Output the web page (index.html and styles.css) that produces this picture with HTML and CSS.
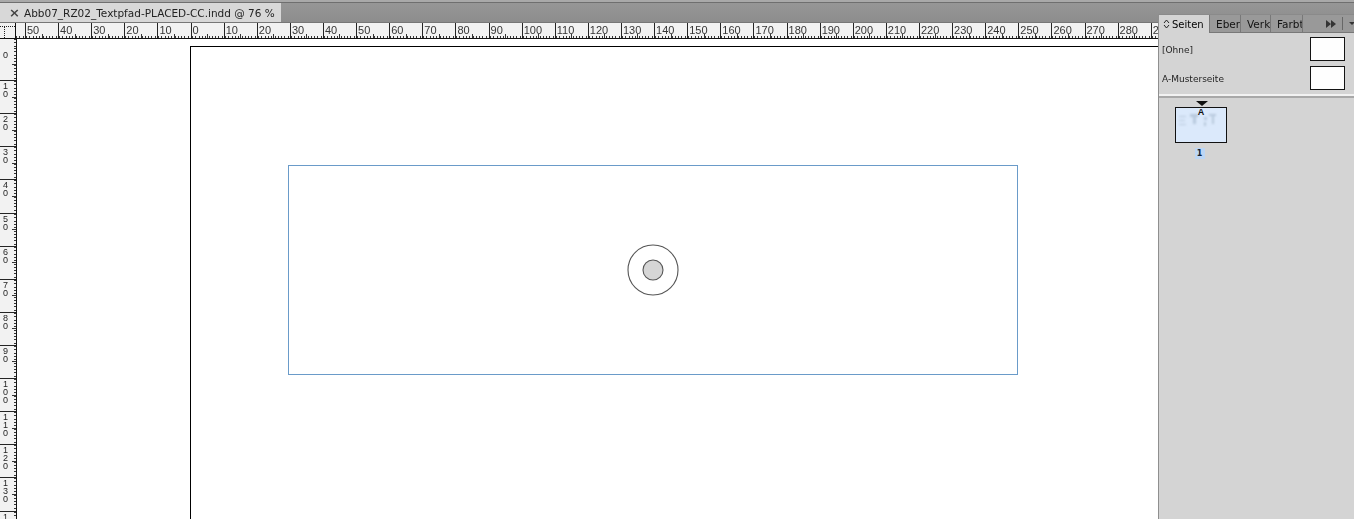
FILE: index.html
```html
<!DOCTYPE html>
<html lang="de">
<head>
<meta charset="utf-8">
<title>Abb07_RZ02_Textpfad-PLACED-CC.indd @ 76 %</title>
<link rel="stylesheet" href="styles.css">
</head>
<body>
<div class="app">
  <header class="tabbar">
    <div class="doc-tab"><span class="doc-close">×</span><span class="doc-title">Abb07_RZ02_Textpfad-PLACED-CC.indd @ 76 %</span></div>
  </header>
  <div class="ruler-h">
    <div class="ruler-corner"></div>
    <div class="ruler-h-track">
      <span class="hc"></span><span class="hc">50</span><span class="hc">40</span><span class="hc">30</span><span class="hc">20</span><span class="hc">10</span><span class="hc">0</span><span class="hc">10</span><span class="hc">20</span><span class="hc">30</span><span class="hc">40</span><span class="hc">50</span><span class="hc">60</span><span class="hc">70</span><span class="hc">80</span><span class="hc">90</span><span class="hc">100</span><span class="hc">110</span><span class="hc">120</span><span class="hc">130</span><span class="hc">140</span><span class="hc">150</span><span class="hc">160</span><span class="hc">170</span><span class="hc">180</span><span class="hc">190</span><span class="hc">200</span><span class="hc">210</span><span class="hc">220</span><span class="hc">230</span><span class="hc">240</span><span class="hc">250</span><span class="hc">260</span><span class="hc">270</span><span class="hc">280</span><span class="hc">290</span>
    </div>
  </div>
  <div class="work">
    <div class="ruler-v">
      <div class="vc vc-lead"></div>
      <div class="vc vc-zero"><span>0</span></div>
      <div class="vc"><span>1</span><span>0</span></div>
      <div class="vc"><span>2</span><span>0</span></div>
      <div class="vc"><span>3</span><span>0</span></div>
      <div class="vc"><span>4</span><span>0</span></div>
      <div class="vc"><span>5</span><span>0</span></div>
      <div class="vc"><span>6</span><span>0</span></div>
      <div class="vc"><span>7</span><span>0</span></div>
      <div class="vc"><span>8</span><span>0</span></div>
      <div class="vc"><span>9</span><span>0</span></div>
      <div class="vc"><span>1</span><span>0</span><span>0</span></div>
      <div class="vc"><span>1</span><span>1</span><span>0</span></div>
      <div class="vc"><span>1</span><span>2</span><span>0</span></div>
      <div class="vc"><span>1</span><span>3</span><span>0</span></div>
      <div class="vc vc-last"><span>1</span></div>
    </div>
    <main class="canvas">
      <div class="page"></div>
      <div class="frame"></div>
      <svg class="target" width="54" height="54" viewBox="0 0 54 54">
        <circle class="target-outer" cx="27" cy="27" r="25"></circle>
        <circle class="target-inner" cx="27" cy="27" r="10"></circle>
      </svg>
    </main>
  </div>
  <aside class="panel">
    <div class="panel-tabs">
      <div class="ptab ptab-active">
        <svg class="updown" width="7" height="10" viewBox="0 0 7 10"><path d="M1 4 3.5 1 6 4M1 6 3.5 9 6 6"></path></svg>
        <span>Seiten</span>
      </div>
      <div class="ptab ptab-eber"><span>Eber</span></div>
      <div class="ptab ptab-verk"><span>Verk</span></div>
      <div class="ptab ptab-farb"><span>Farbt</span></div>
      <div class="ptab-rest">
        <svg class="chevrons" width="10" height="8" viewBox="0 0 10 8"><path d="M0 0 5 4 0 8ZM5 0 10 4 5 8Z"></path></svg>
        <span class="ptab-div"></span>
        <svg class="menu-caret" width="6" height="3" viewBox="0 0 6 3"><path d="M0 0H6L3 3Z"></path></svg>
      </div>
    </div>
    <div class="masters">
      <div class="master"><span>[Ohne]</span><div class="swatch"></div></div>
      <div class="master"><span>A-Musterseite</span><div class="swatch"></div></div>
    </div>
    <div class="pages">
      <div class="spread">
        <svg class="spread-mark" width="12" height="5" viewBox="0 0 12 5"><path d="M0 0H12L6 5Z"></path></svg>
        <div class="thumb">
          <svg class="thumb-art" width="40" height="18" viewBox="0 0 40 18">
            <path class="art-a" d="M2 5H9V6H2ZM2 9H8V10H2ZM2 13H9V14H2ZM13 3H21V6H19V13H16V6H13ZM27 6H30V9H27ZM27 11H29V15H27ZM32 3H39V5H37V13H35V5H32Z"></path>
          </svg>
          <span class="thumb-a">A</span>
        </div>
        <span class="page-num">1</span>
      </div>
    </div>
  </aside>
</div>
</body>
</html>
```
FILE: styles.css
```css
* { box-sizing: border-box; }

html, body {
  margin: 0;
  padding: 0;
  background: #fff;
}

.app {
  position: relative;
  width: 1354px;
  height: 519px;
  overflow: hidden;
  display: flex;
  flex-direction: column;
  font-family: "Liberation Sans", Arial, sans-serif;
  color: #222;
}

/* document tab strip */
.tabbar {
  flex: none;
  height: 22px;
  padding-top: 1px;
  background: linear-gradient(#979797, #8d8d8d);
  border-top: 2px solid #a9a9a9;
  box-shadow: inset 0 1px 0 #6f6f6f;
  display: flex;
}

.doc-tab {
  width: 281px;
  background: #d9d9d9;
  display: flex;
  align-items: center;
  font-family: "DejaVu Sans", sans-serif;
  font-size: 10.5px;
  color: #222;
  opacity: 0.99;
}

.doc-close {
  flex: none;
  width: 24px;
  padding-left: 9px;
  font-size: 13px;
  line-height: 1;
  font-weight: bold;
  color: #444;
}

.doc-title {
  white-space: nowrap;
}

/* horizontal ruler */
.ruler-h {
  flex: none;
  height: 17px;
  display: flex;
  background: #f2f2f2;
  border-top: 1px solid #777;
  border-bottom: 1px solid #111;
  overflow: hidden;
}

.ruler-corner {
  flex: none;
  position: relative;
  z-index: 1;
  width: 16px;
  height: 15px;
  background: #f2f2f2;
  border-right: 1px solid #111;
}

.ruler-corner::before {
  content: "";
  position: absolute;
  left: 0;
  top: 3px;
  width: 15px;
  border-top: 1px dotted #222;
}

.ruler-corner::after {
  content: "";
  position: absolute;
  left: 4px;
  top: 3px;
  height: 12px;
  border-left: 1px dotted #222;
}

.ruler-h-track {
  flex: none;
  display: flex;
  margin-left: -24.12px;
  opacity: 0.99;
}

.hc {
  flex: none;
  position: relative;
  width: 33.12px;
  height: 15px;
  padding: 1px 0 0 1px;
  font-size: 11px;
  line-height: 13px;
  color: #333;
  border-left: 1px solid #222;
  background-image: repeating-linear-gradient(90deg, #333 0 1px, transparent 1px 3.312px);
  background-size: 100% 2px;
  background-position: 0 100%;
  background-repeat: no-repeat;
}

.hc::after {
  content: "";
  position: absolute;
  left: 15.5px;
  bottom: 0;
  height: 4px;
  border-left: 1px solid #333;
}

/* work area */
.work {
  flex: 1;
  min-height: 0;
  display: flex;
}

.ruler-v {
  flex: none;
  width: 17px;
  background: #f2f2f2;
  border-right: 1px solid #111;
  overflow: hidden;
  opacity: 0.99;
}

.vc {
  position: relative;
  height: 33.12px;
  padding: 1px 0 0 3px;
  display: flex;
  flex-direction: column;
  font-size: 9px;
  line-height: 8px;
  color: #222;
  border-top: 1px solid #222;
  background-image: repeating-linear-gradient(180deg, #333 0 1px, transparent 1px 3.312px);
  background-size: 2px 100%;
  background-position: 100% 0;
  background-repeat: no-repeat;
}

.vc::after {
  content: "";
  position: absolute;
  right: 0;
  top: 15.5px;
  width: 4px;
  border-top: 1px solid #333;
}

.vc-lead {
  height: 8px;
  border-top: 0;
  padding: 0;
}

.vc-lead::after {
  display: none;
}

.vc-zero {
  padding-top: 3px;
  border-top-color: #f2f2f2;
}

.vc-last {
  height: 12px;
}

.canvas {
  flex: 1;
  position: relative;
  background: #fff;
}

.page {
  position: absolute;
  left: 173px;
  top: 7px;
  width: 1200px;
  height: 800px;
  background: #fff;
  border: 1.5px solid #000;
}

.frame {
  position: absolute;
  left: 271px;
  top: 126px;
  width: 730px;
  height: 210px;
  border: 1px solid #6a9bc9;
}

.target {
  position: absolute;
  left: 609px;
  top: 204px;
}

.target-outer {
  fill: #fff;
  stroke: #555;
  stroke-width: 1.1;
}

.target-inner {
  fill: #d6d6d6;
  stroke: #555;
  stroke-width: 1.1;
}

/* pages panel */
.panel {
  position: absolute;
  left: 1158px;
  top: 14px;
  right: 0;
  bottom: 0;
  display: flex;
  flex-direction: column;
  background: #d4d4d4;
  border-left: 1px solid #8f8f8f;
  border-top: 1px solid #8a8a8a;
  font-family: "DejaVu Sans", sans-serif;
}

.panel-tabs {
  flex: none;
  height: 18px;
  display: flex;
  background: #999;
  font-size: 10.5px;
  opacity: 0.99;
}

.ptab {
  flex: none;
  display: flex;
  align-items: center;
  overflow: hidden;
  white-space: nowrap;
  padding-left: 6px;
  color: #111;
  background: #999;
  border-bottom: 1px solid #777;
  border-right: 1px solid #777;
}

.ptab-active {
  width: 51px;
  padding-left: 4px;
  gap: 2px;
  background: #d4d4d4;
  border-bottom: 0;
  color: #000;
  font-size: 10px;
}

.ptab-eber { width: 31px; }
.ptab-verk { width: 30px; }
.ptab-farb { width: 32px; }

.updown {
  fill: none;
  stroke: #222;
  stroke-width: 1;
}

.ptab-rest {
  flex: 1;
  display: flex;
  align-items: center;
  padding-left: 23px;
  border-bottom: 1px solid #777;
}

.chevrons {
  fill: #333;
  flex: none;
}

.ptab-div {
  flex: none;
  width: 1px;
  height: 13px;
  margin: 0 6px;
  background: #666;
}

.menu-caret {
  flex: none;
  fill: #333;
}

.masters {
  flex: none;
  height: 61px;
  padding: 4px 9px 0 3px;
  display: flex;
  flex-direction: column;
  gap: 5px;
  font-size: 9px;
  color: #222;
  opacity: 0.99;
}

.master {
  height: 24px;
  display: flex;
  align-items: center;
  justify-content: space-between;
}

.master span {
  padding-top: 2px;
}

.swatch {
  width: 35px;
  height: 24px;
  background: #fff;
  border: 1px solid #111;
}

.pages {
  flex: 1;
  border-top: 2px solid #f2f2f2;
  box-shadow: inset 0 2px 0 #a8a8a8;
  padding: 5px 0 0 16px;
}

.spread {
  width: 52px;
  display: flex;
  flex-direction: column;
  align-items: center;
}

.spread-mark {
  fill: #111;
  display: block;
  margin-left: 1px;
}

.thumb {
  position: relative;
  width: 52px;
  height: 36px;
  margin-top: 1px;
  background: #dbe9fb;
  border: 1px solid #111;
}

.thumb-art {
  position: absolute;
  left: 1px;
  top: 3px;
  filter: blur(0.8px);
}

.art-a {
  fill: #b7c8dc;
}

.thumb-a {
  position: absolute;
  left: 0;
  right: 0;
  top: 0;
  text-align: center;
  font-family: "Liberation Sans", sans-serif;
  font-size: 9px;
  line-height: 9px;
  font-weight: bold;
  color: #111;
}

.page-num {
  width: 10px;
  height: 11px;
  margin-top: 5px;
  margin-right: 3px;
  background: #bcd6f5;
  text-align: center;
  font-size: 8px;
  line-height: 11px;
  font-weight: bold;
  color: #123;
}
```
